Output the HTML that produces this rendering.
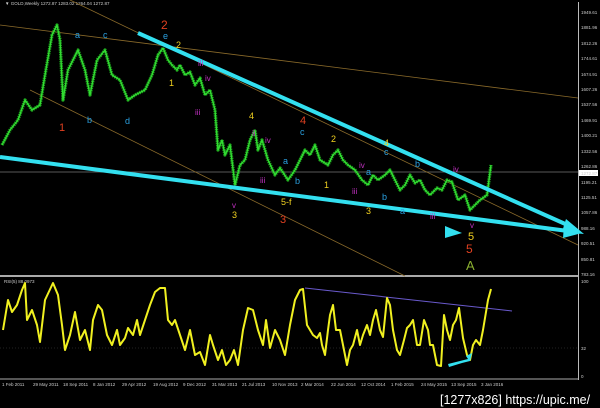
<!DOCTYPE html>
<html><head><meta charset="utf-8"><style>
html,body{margin:0;padding:0;background:#000;width:600px;height:408px;overflow:hidden}
svg{display:block}
text{font-family:"Liberation Sans",sans-serif}
.ax{fill:#ccc;font-size:4.5px}
.l{font-size:9px}
</style></head><body>
<svg width="600" height="408" viewBox="0 0 600 408" xmlns="http://www.w3.org/2000/svg">
<rect width="600" height="408" fill="#000"/>
<text x="5" y="5" class="ax" fill="#ccc">▼ GOLD,Weekly  1272.87 1283.02 1264.04 1272.87</text>
<line x1="578.5" y1="2" x2="578.5" y2="380" stroke="#bbb" stroke-width="1"/>
<line x1="0" y1="276" x2="578" y2="276" stroke="#aaa" stroke-width="2"/>
<line x1="0" y1="379" x2="578" y2="379" stroke="#aaa" stroke-width="1"/>
<line x1="0" y1="172" x2="578" y2="172" stroke="#777" stroke-width="0.7"/>
<line x1="0" y1="348" x2="578" y2="348" stroke="#444" stroke-width="0.5" stroke-dasharray="1,2"/>
<g class="ax">
<text x="581" y="14">1949.61</text><text x="581" y="29">1881.96</text><text x="581" y="45">1812.26</text>
<text x="581" y="60">1744.61</text><text x="581" y="76">1674.91</text><text x="581" y="91">1607.26</text>
<text x="581" y="106">1537.56</text><text x="581" y="122">1469.91</text><text x="581" y="137">1400.21</text>
<text x="581" y="153">1332.56</text><text x="581" y="168">1262.86</text><text x="581" y="199">1125.51</text>
<text x="581" y="184">1195.21</text><text x="581" y="214">1057.86</text><text x="581" y="230">988.16</text>
<text x="581" y="245">920.51</text><text x="581" y="261">850.81</text><text x="581" y="276">783.16</text>
<text x="581" y="283">100</text><text x="581" y="350">32</text><text x="581" y="378">0</text>
</g>
<rect x="579" y="170" width="19" height="6" fill="#fff"/><text x="581" y="175" class="ax" fill="#000">1272.87</text>
<text x="4" y="283" class="ax">RSI(5) 88.0973</text>
<g class="ax">
<text x="2" y="386">1 Feb 2011</text><text x="33" y="386">29 May 2011</text><text x="63" y="386">18 Sep 2011</text>
<text x="93" y="386">8 Jan 2012</text><text x="122" y="386">29 Apr 2012</text><text x="153" y="386">19 Aug 2012</text>
<text x="183" y="386">9 Dec 2012</text><text x="212" y="386">31 Mar 2013</text><text x="242" y="386">21 Jul 2013</text>
<text x="272" y="386">10 Nov 2013</text><text x="301" y="386">2 Mar 2014</text><text x="331" y="386">22 Jun 2014</text>
<text x="361" y="386">12 Oct 2014</text><text x="391" y="386">1 Feb 2015</text><text x="421" y="386">24 May 2015</text>
<text x="451" y="386">13 Sep 2015</text><text x="481" y="386">3 Jan 2016</text>
</g>
<line x1="0" y1="25" x2="578" y2="98" stroke="#8a6a2a" stroke-width="0.8"/>
<line x1="70" y1="0" x2="578" y2="245" stroke="#8a6a2a" stroke-width="0.8"/>
<line x1="30" y1="90" x2="405" y2="276" stroke="#8a6a2a" stroke-width="0.8"/>
<polyline fill="none" stroke="#1a9a1a" stroke-width="3.4" stroke-linejoin="round" stroke-dasharray="1.5,0.8" points="2,145 10,130 18,120 25,100 32,110 40,105 45,75 52,35 57,25 60,40 63,100 68,70 73,60 78,50 85,70 90,95 97,60 105,50 112,75 120,80 128,100 135,95 145,90 152,75 158,55 163,48 168,60 172,65 177,70 180,65 185,75 190,72 195,85 200,78 205,95 210,90 215,110 218,150 222,140 225,155 230,145 235,185 240,165 245,160 250,140 255,130 258,150 262,140 268,160 275,175 280,168 288,180 295,170 300,160 305,150 310,155 315,145 320,160 328,165 333,155 338,150 343,160 348,165 355,170 362,180 368,185 373,175 378,180 385,175 390,170 395,180 400,190 405,185 410,175 415,183 420,180 425,190 430,195 437,188 442,190 447,180 452,182 458,200 465,195 470,210 475,205 480,200 487,195 491,165"/>
<polyline fill="none" stroke="#33dd33" stroke-width="1.4" stroke-linejoin="round" points="2,145 10,130 18,120 25,100 32,110 40,105 45,75 52,35 57,25 60,40 63,100 68,70 73,60 78,50 85,70 90,95 97,60 105,50 112,75 120,80 128,100 135,95 145,90 152,75 158,55 163,48 168,60 172,65 177,70 180,65 185,75 190,72 195,85 200,78 205,95 210,90 215,110 218,150 222,140 225,155 230,145 235,185 240,165 245,160 250,140 255,130 258,150 262,140 268,160 275,175 280,168 288,180 295,170 300,160 305,150 310,155 315,145 320,160 328,165 333,155 338,150 343,160 348,165 355,170 362,180 368,185 373,175 378,180 385,175 390,170 395,180 400,190 405,185 410,175 415,183 420,180 425,190 430,195 437,188 442,190 447,180 452,182 458,200 465,195 470,210 475,205 480,200 487,195 491,165"/>
<line x1="138" y1="33" x2="572" y2="227" stroke="#33e0f0" stroke-width="4"/>
<polygon points="566,219 584,234 562,232" fill="#33e0f0"/>
<line x1="0" y1="157" x2="568" y2="231" stroke="#33e0f0" stroke-width="4"/>
<polygon points="564,225 582,233 563,238" fill="#33e0f0"/>
<polygon points="445,226 462,233 445,238" fill="#33e0f0"/>
<g class="l">
<text x="59" y="131" fill="#e04020" font-size="11">1</text>
<text x="161" y="29" fill="#e04020" font-size="12">2</text>
<text x="300" y="124" fill="#e04020" font-size="11">4</text>
<text x="280" y="223" fill="#e04020" font-size="11">3</text>
<text x="466" y="253" fill="#e04020" font-size="12">5</text>
<text x="466" y="270" fill="#8ab030" font-size="13">A</text>
<text x="75" y="38" fill="#2aa0e0">a</text><text x="103" y="38" fill="#2aa0e0">c</text>
<text x="163" y="39" fill="#2aa0e0">e</text><text x="87" y="123" fill="#2aa0e0">b</text>
<text x="125" y="124" fill="#2aa0e0">d</text><text x="283" y="164" fill="#2aa0e0">a</text>
<text x="300" y="135" fill="#2aa0e0">c</text><text x="295" y="184" fill="#2aa0e0">b</text>
<text x="366" y="175" fill="#2aa0e0">a</text><text x="382" y="200" fill="#2aa0e0">b</text>
<text x="400" y="214" fill="#2aa0e0">a</text><text x="384" y="155" fill="#2aa0e0">c</text>
<text x="415" y="167" fill="#2aa0e0">b</text>
<text x="176" y="48" fill="#f0d020">2</text><text x="169" y="86" fill="#f0d020">1</text>
<text x="249" y="119" fill="#f0d020">4</text><text x="232" y="218" fill="#f0d020">3</text>
<text x="281" y="205" fill="#f0d020">5-f</text><text x="331" y="142" fill="#f0d020">2</text>
<text x="324" y="188" fill="#f0d020">1</text><text x="366" y="214" fill="#f0d020">3</text>
<text x="384" y="146" fill="#f0d020">4</text><text x="468" y="240" fill="#f0d020" font-size="11">5</text>
<text x="198" y="66" fill="#c030c0" font-size="8">iii</text><text x="205" y="81" fill="#c030c0" font-size="8">iv</text>
<text x="195" y="115" fill="#c030c0" font-size="8">iii</text><text x="265" y="143" fill="#c030c0" font-size="8">iv</text>
<text x="260" y="183" fill="#c030c0" font-size="8">iii</text><text x="359" y="168" fill="#c030c0" font-size="8">iv</text>
<text x="352" y="194" fill="#c030c0" font-size="8">iii</text><text x="453" y="172" fill="#c030c0" font-size="8">iv</text>
<text x="430" y="219" fill="#c030c0" font-size="8">iii</text><text x="470" y="228" fill="#c030c0" font-size="8">v</text>
<text x="232" y="208" fill="#c030c0" font-size="8">v</text><text x="252" y="136" fill="#c030c0" font-size="8">ii</text>
</g>
<line x1="305" y1="288" x2="512" y2="311" stroke="#6a5acd" stroke-width="1"/>
<polyline fill="none" stroke="#f0f020" stroke-width="2" stroke-linejoin="round" points="3,330 8,300 12,312 17,305 22,290 25,283 27,320 32,310 37,325 40,342 45,300 53,283 58,295 62,325 65,350 70,335 75,312 80,340 85,330 90,350 93,320 98,305 102,310 107,335 112,345 117,330 120,345 125,338 128,328 133,335 137,320 140,335 145,320 150,305 155,292 160,288 165,288 168,320 172,325 175,320 180,335 185,350 190,330 195,355 200,352 205,365 210,335 213,345 218,360 222,350 226,365 230,360 234,350 238,365 243,330 248,308 253,310 258,330 263,345 266,320 270,348 275,330 280,340 285,355 290,325 295,300 300,290 303,289 307,325 310,330 313,335 317,338 320,333 322,345 325,355 328,330 330,315 333,305 336,330 340,330 343,345 347,365 350,350 353,345 357,330 360,345 363,335 367,325 370,335 373,320 376,310 380,330 383,337 387,298 390,305 393,330 397,350 400,355 404,340 407,328 410,325 413,320 417,345 420,345 424,320 428,330 430,345 433,345 437,365 441,366 444,315 447,330 450,340 453,325 456,320 459,308 463,338 467,355 470,360 473,345 476,340 480,345 483,330 485,318 488,300 491,289"/>
<polygon points="448,364 468,359 466,356 472,353 470,361 462,363 449,367" fill="#33e0f0"/>
<text x="440" y="404" fill="#fff" font-family="Liberation Sans,sans-serif" font-size="12.5">[1277x826] https://upic.me/</text>
</svg>
</body></html>
